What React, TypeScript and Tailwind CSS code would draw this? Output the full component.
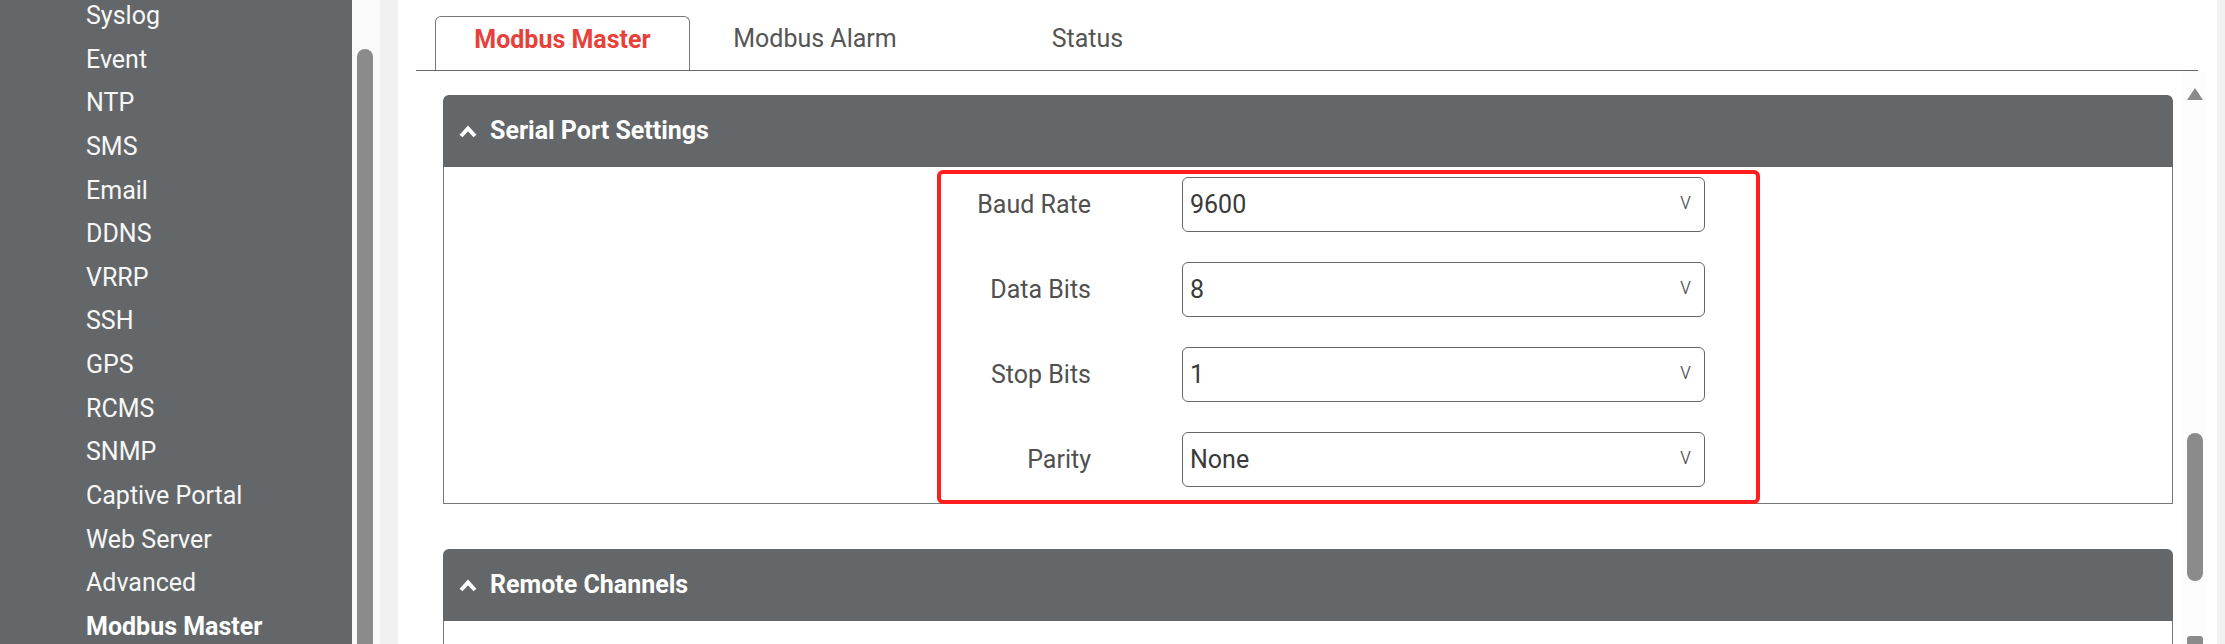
const menu = [
  "Syslog",
  "Event",
  "NTP",
  "SMS",
  "Email",
  "DDNS",
  "VRRP",
  "SSH",
  "GPS",
  "RCMS",
  "SNMP",
  "Captive Portal",
  "Web Server",
  "Advanced",
];

const fields = [
  { label: "Baud Rate", value: "9600" },
  { label: "Data Bits", value: "8" },
  { label: "Stop Bits", value: "1" },
  { label: "Parity", value: "None" },
];

function Chevron() {
  return (
    <svg width="18" height="13" viewBox="0 0 18 13" className="shrink-0">
      <polyline points="2,11 9,3.5 16,11" fill="none" stroke="white" strokeWidth="4" />
    </svg>
  );
}

function PanelHeader({ title }: { title: string }) {
  return (
    <div className="flex h-[72px] items-center gap-[13px] rounded-t-[6px] bg-[#646769] pl-[16px] text-[25px] font-bold text-white">
      <Chevron />
      <span>{title}</span>
    </div>
  );
}

function SelectRow({ label, value }: { label: string; value: string }) {
  return (
    <div className="flex items-center">
      <div className="w-[648px] pr-px text-right text-[25px] text-[#505050]">{label}</div>
      <div className="ml-[90px] flex h-[55px] w-[523px] items-center justify-between rounded-[6px] border border-[#666] pl-[7px] pr-[13px]">
        <span className="text-[25px] text-[#3a3a3a]">{value}</span>
        <span className="-mt-[4px] text-[23px] font-light text-[#555]">v</span>
      </div>
    </div>
  );
}

export default function App() {
  return (
    <div className="flex h-[644px] w-[2225px] overflow-hidden bg-white font-[family-name:Roboto,sans-serif]">
      {/* left menu */}
      <aside className="w-[352px] shrink-0 bg-[#646769]">
        <ul className="-mt-[6px] pl-[86px] text-[25px] text-[#f7f7f7]">
          {menu.map((m) => (
            <li key={m} className="leading-[43.64px]">
              {m}
            </li>
          ))}
          <li className="font-bold leading-[43.64px] text-white">Modbus Master</li>
        </ul>
      </aside>
      <div className="w-[28px] shrink-0 bg-[#fafafa] pl-[5px] pt-[49px]">
        <div className="h-[700px] w-[16px] rounded-full bg-[#8b8b8b]" />
      </div>
      <div className="w-[18px] shrink-0 bg-[#f1f1f1]" />

      {/* main */}
      <main className="flex min-w-0 flex-1 flex-col">
        <div className="ml-[18px] flex h-[71px] w-[1782px] shrink-0 border-b border-[#666] pl-[19px] pt-[16px] text-[25px]">
          <div className="flex w-[255px] items-center justify-center rounded-t-[6px] border border-b-0 border-[#777] pb-[8px] font-bold text-[#e8403a]">
            Modbus Master
          </div>
          <div className="flex w-[250px] items-center justify-center pb-[8px] text-[#555]">Modbus Alarm</div>
          <div className="flex w-[295px] items-center justify-center pb-[8px] text-[#555]">Status</div>
        </div>

        <div className="flex min-h-0 flex-1">
          <div className="w-[1785px] shrink-0 pl-[45px] pt-[24px]">
            <div className="w-[1730px]">
              <PanelHeader title="Serial Port Settings" />
              <div className="relative flex h-[337px] flex-col gap-[30px] border border-t-0 border-[#777] pt-[10px]">
                {fields.map((f) => (
                  <SelectRow key={f.label} label={f.label} value={f.value} />
                ))}
                <div className="absolute left-[493px] top-[3px] h-[334px] w-[823px] rounded-[6px] border-[4px] border-[#ff1f1f]" />
              </div>
            </div>
            <div className="mt-[45px] w-[1730px]">
              <PanelHeader title="Remote Channels" />
              <div className="h-[40px] border-x border-[#777]" />
            </div>
          </div>

          {/* inner scrollbar */}
          <div className="flex w-[24px] shrink-0 flex-col items-center bg-[#fdfdfd] pt-[17px]">
            <div className="h-0 w-0 border-x-[8px] border-b-[12px] border-x-transparent border-b-[#8b8b8b]" />
            <div className="mt-[333px] h-[152px] w-[16px] rounded-full bg-[#8b8b8b]" />
            <div className="mt-[55px] h-[8px] w-[16px] rounded-t-[3px] bg-[#8b8b8b]" />
          </div>
          <div className="flex-1" />
        </div>
      </main>
      <div className="w-[8px] shrink-0 bg-[#f1f1f1]" />
    </div>
  );
}
